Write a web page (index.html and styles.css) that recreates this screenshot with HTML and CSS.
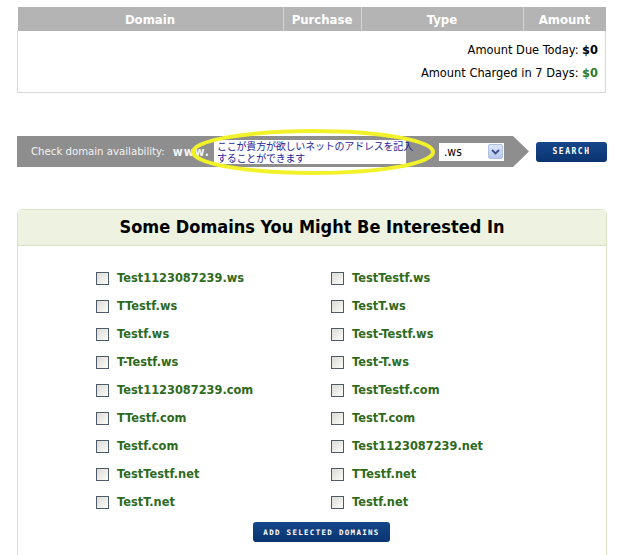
FILE: index.html
```html
<!DOCTYPE html>
<html>
  <head>
    <title>Domain Search</title>
    <link rel="stylesheet" href="styles.css">
  </head>
  <body>
    <div class="page">
      <table class="cart">
        <thead>
          <tr>
            <th class="col-domain">Domain</th>
            <th class="col-purchase">Purchase</th>
            <th class="col-type">Type</th>
            <th class="col-amount">Amount</th>
          </tr>
        </thead>
        <tbody>
          <tr>
            <td colspan="4" class="totals">
              <p>Amount Due Today: <b>$0</b></p>
              <p>Amount Charged in 7 Days: <b class="green">$0</b></p>
            </td>
          </tr>
        </tbody>
      </table>

      <div class="check-row">
        <div class="check-bar">
          <span class="check-label">Check domain availability:</span>
          <span class="www">www.</span>
          <div class="domain-input">
            <span>ここが貴方が欲しいネットのアドレスを記入</span>
            <span>することができます</span>
          </div>
          <div class="tld-select">
            <span>.ws</span>
            <span class="tld-arrow">
              <svg width="9" height="6" viewBox="0 0 9 6"><path d="M1 1 L4.5 4.5 L8 1" fill="none" stroke="#3a4f8c" stroke-width="1.8"/></svg>
            </span>
          </div>
        </div>
        <button class="btn btn-search">SEARCH</button>
        <svg class="highlight" width="250" height="50" viewBox="0 0 250 50">
          <ellipse cx="125" cy="25" rx="120" ry="21" fill="none" stroke="#f2f22a" stroke-width="4"/>
        </svg>
      </div>

      <div class="suggest">
        <h2>Some Domains You Might Be Interested In</h2>
        <div class="suggest-list">
          <label><span class="box"></span>Test1123087239.ws</label>
          <label><span class="box"></span>TestTestf.ws</label>
          <label><span class="box"></span>TTestf.ws</label>
          <label><span class="box"></span>TestT.ws</label>
          <label><span class="box"></span>Testf.ws</label>
          <label><span class="box"></span>Test-Testf.ws</label>
          <label><span class="box"></span>T-Testf.ws</label>
          <label><span class="box"></span>Test-T.ws</label>
          <label><span class="box"></span>Test1123087239.com</label>
          <label><span class="box"></span>TestTestf.com</label>
          <label><span class="box"></span>TTestf.com</label>
          <label><span class="box"></span>TestT.com</label>
          <label><span class="box"></span>Testf.com</label>
          <label><span class="box"></span>Test1123087239.net</label>
          <label><span class="box"></span>TestTestf.net</label>
          <label><span class="box"></span>TTestf.net</label>
          <label><span class="box"></span>TestT.net</label>
          <label><span class="box"></span>Testf.net</label>
        </div>
        <div class="suggest-actions">
          <button class="btn btn-add">ADD SELECTED DOMAINS</button>
        </div>
      </div>
    </div>
  </body>
</html>
```

FILE: styles.css
```css
body {
  margin: 0;
  background: #fff;
  font-family: "DejaVu Sans Condensed", "Liberation Sans", sans-serif;
  font-size: 12px;
  color: #000;
}
.page {
  width: 590px;
  padding: 7px 0 0 17px;
}

/* cart table */
.cart {
  width: 589px;
  border-collapse: collapse;
  table-layout: fixed;
}
.cart th {
  height: 24px;
  padding: 0;
  background-color: #b4b4b4;
  color: #fff;
  font-size: 13px;
  font-weight: bold;
  border-left: 1px solid #d4d4d4;
}
.cart th:first-child {
  border-left: none;
}
.col-domain { width: 265px; }
.col-purchase { width: 77px; }
.col-type { width: 161px; }
.totals {
  border: 1px solid #d8d8d8;
  border-top: none;
  text-align: right;
  padding: 7px 7px 8px 0;
  font-size: 12.7px;
}
.totals p {
  margin: 0;
  line-height: 23px;
}
.green {
  color: #2f7a1f;
}

/* availability bar */
.check-row {
  position: relative;
  display: flex;
  align-items: center;
  margin-top: 43px;
}
.check-bar {
  display: flex;
  align-items: center;
  width: 512px;
  height: 31px;
  background-color: #8e8e8e;
  clip-path: polygon(0 0, 496px 0, 100% 50%, 496px 100%, 0 100%);
}
.check-label {
  margin-left: 14px;
  color: #f2f2f2;
  font-size: 11.3px;
}
.www {
  margin-left: 8px;
  color: #f4f4f4;
  font-weight: bold;
  font-size: 12px;
  letter-spacing: 1px;
}
.domain-input {
  display: flex;
  flex-direction: column;
  margin-left: 4px;
  width: 189px;
  height: 24px;
  padding-left: 3px;
  background: #fff;
  color: #1e1e9a;
  font-family: "Noto Sans CJK JP", sans-serif;
  font-size: 10px;
  line-height: 12px;
  letter-spacing: -0.2px;
  white-space: nowrap;
}
.tld-select {
  display: flex;
  align-items: center;
  justify-content: space-between;
  margin-left: 33px;
  width: 65px;
  height: 18px;
  padding: 0 1px 0 5px;
  box-sizing: border-box;
  background: #fff;
  font-size: 12px;
}
.tld-arrow {
  display: flex;
  align-items: center;
  justify-content: center;
  width: 15px;
  height: 15px;
  border: 1px solid #aebfe0;
  border-radius: 2px;
  box-sizing: border-box;
  background: linear-gradient(#dce6fa, #b8c9ee);
}
.btn {
  border: none;
  border-radius: 3px;
  background: linear-gradient(#15468a, #0b3470);
  color: #fff;
  font-family: "DejaVu Sans Mono", monospace;
  font-size: 8px;
  font-weight: bold;
  letter-spacing: 1.5px;
  padding: 0;
  cursor: pointer;
}
.btn-search {
  margin-left: 7px;
  width: 71px;
  height: 20px;
}
.highlight {
  position: absolute;
  left: 171px;
  top: -9px;
  pointer-events: none;
}

/* suggestions */
.suggest {
  margin-top: 42px;
  border: 1px solid #d9e2c6;
  border-radius: 6px 6px 0 0;
  height: 360px;
}
.suggest h2 {
  margin: 0;
  height: 35px;
  line-height: 34px;
  text-align: center;
  background-color: #eef3e1;
  border-bottom: 1px solid #d9e2c6;
  border-radius: 6px 6px 0 0;
  font-size: 18px;
  font-weight: bold;
  color: #000;
}
.suggest-list {
  display: grid;
  grid-template-columns: 235px 200px;
  grid-auto-rows: 28px;
  padding: 18px 0 0 78px;
}
.suggest-list label {
  display: flex;
  align-items: center;
  font-family: "DejaVu Sans", Verdana, sans-serif;
  font-size: 11.4px;
  font-weight: bold;
  color: #2e6a1c;
}
.box {
  width: 11px;
  height: 11px;
  margin-right: 8px;
  border: 1px solid #4d5a68;
  background: linear-gradient(135deg, #dcdcd6, #fbfbf8);
}
.suggest-actions {
  display: flex;
  justify-content: center;
  margin-top: 6px;
  padding-left: 19px;
}
.btn-add {
  width: 137px;
  height: 20px;
  font-size: 7.5px;
  letter-spacing: 1.3px;
}
```
